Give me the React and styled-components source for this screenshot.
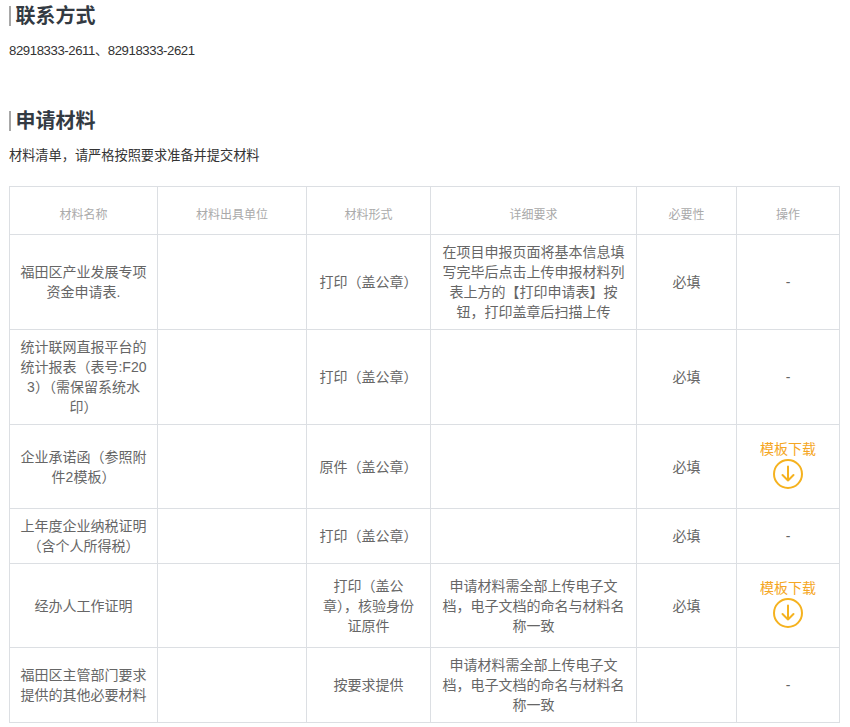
import React from 'react';
import styled, { createGlobalStyle } from 'styled-components';

const GlobalStyle = createGlobalStyle`
  html, body {
    margin: 0;
    padding: 0;
    background: #fff;
    font-family: "Liberation Sans", "Noto Sans CJK SC", sans-serif;
  }
`;

const Page = styled.div`
  width: 850px;
  height: 727px;
  overflow: hidden;
  padding: 0 10px 0 9px;
  box-sizing: border-box;
`;

const Heading = styled.h2`
  margin: ${({ $top }) => $top}px 0 0;
  height: 20px;
  display: flex;
  align-items: center;
  border-left: 2px solid #a8a8a8;
  padding-left: 4.5px;
  font-size: 20px;
  line-height: 20px;
  font-weight: 700;
  color: #333a42;
`;

const Text = styled.p`
  margin: 15px 0 0;
  height: 20px;
  font-size: 13.2px;
  line-height: 20px;
  letter-spacing: ${({ $tight }) => ($tight ? '-0.42px' : '0')};
  color: #333;
`;

const Table = styled.table`
  width: 831px;
  margin-top: 20px;
  border-collapse: collapse;
  table-layout: fixed;
`;

const HeadCell = styled.th`
  height: 48px;
  padding: 6px 0 0;
  box-sizing: border-box;
  border: 1px solid #dcdfe3;
  font-size: 12px;
  font-weight: 400;
  color: #aaa;
  text-align: center;
`;

const Cell = styled.td`
  height: ${({ $h }) => $h - 1}px;
  padding: 0 10px;
  border: 1px solid #dcdfe3;
  font-size: 14px;
  line-height: 20px;
  color: #666;
  text-align: center;
  word-break: break-all;
`;

const Download = styled.div`
  display: flex;
  flex-direction: column;
  align-items: center;
  padding-bottom: 6px;
  color: #f5a623;
  font-size: 14px;
  line-height: 20px;
`;

const DownloadIcon = styled.svg`
  display: block;
  width: 30px;
  height: 30px;
  fill: none;
  stroke: #f5b21f;
  stroke-linecap: round;
  stroke-linejoin: round;
`;

const columns = [
  { title: '材料名称', width: 148 },
  { title: '材料出具单位', width: 149 },
  { title: '材料形式', width: 124 },
  { title: '详细要求', width: 206 },
  { title: '必要性', width: 100 },
  { title: '操作', width: 103 },
];

const uploadNote = '申请材料需全部上传电子文档\uFF0C电子文档的命名与材料名称一致';
const printForm = '打印\uFF08盖公章\uFF09';

const rows = [
  {
    h: 95,
    name: '福田区产业发展专项资金申请表.',
    form: printForm,
    detail: '在项目申报页面将基本信息填写完毕后点击上传申报材料列表上方的【打印申请表】按钮\uFF0C打印盖章后扫描上传',
    required: '必填',
  },
  {
    h: 95,
    name: '统计联网直报平台的统计报表\uFF08表号:F203\uFF09\uFF08需保留系统水印\uFF09',
    form: printForm,
    detail: '',
    required: '必填',
  },
  {
    h: 84,
    name: '企业承诺函\uFF08参照附件2模板\uFF09',
    form: '原件\uFF08盖公章\uFF09',
    detail: '',
    required: '必填',
    template: true,
  },
  {
    h: 55,
    name: '上年度企业纳税证明\uFF08含个人所得税\uFF09',
    form: printForm,
    detail: '',
    required: '必填',
  },
  {
    h: 84,
    name: '经办人工作证明',
    form: `${printForm}\uFF0C核验身份证原件`,
    detail: uploadNote,
    required: '必填',
    template: true,
  },
  {
    h: 75,
    name: '福田区主管部门要求提供的其他必要材料',
    form: '按要求提供',
    detail: uploadNote,
    required: '',
  },
];

const TemplateLink = () => (
  <Download>
    模板下载
    <DownloadIcon viewBox="0 0 30 30">
      <circle cx="15" cy="15" r="14" strokeWidth="2" />
      <path d="M15 7.5v14M9.5 16l5.5 5.5 5.5-5.5" strokeWidth="2" />
    </DownloadIcon>
  </Download>
);

const App = () => (
  <Page>
    <GlobalStyle />
    <Heading $top={6}>联系方式</Heading>
    <Text $tight>82918333-2611、82918333-2621</Text>
    <Heading $top={50}>申请材料</Heading>
    <Text>{'材料清单\uFF0C请严格按照要求准备并提交材料'}</Text>
    <Table>
      <colgroup>
        {columns.map(({ title, width }) => (
          <col key={title} style={{ width }} />
        ))}
      </colgroup>
      <thead>
        <tr>
          {columns.map(({ title }) => (
            <HeadCell key={title}>{title}</HeadCell>
          ))}
        </tr>
      </thead>
      <tbody>
        {rows.map((row) => (
          <tr key={row.name}>
            <Cell $h={row.h}>{row.name}</Cell>
            <Cell $h={row.h} />
            <Cell $h={row.h}>{row.form}</Cell>
            <Cell $h={row.h}>{row.detail}</Cell>
            <Cell $h={row.h}>{row.required}</Cell>
            <Cell $h={row.h}>{row.template ? <TemplateLink /> : '-'}</Cell>
          </tr>
        ))}
      </tbody>
    </Table>
  </Page>
);

export default App;
